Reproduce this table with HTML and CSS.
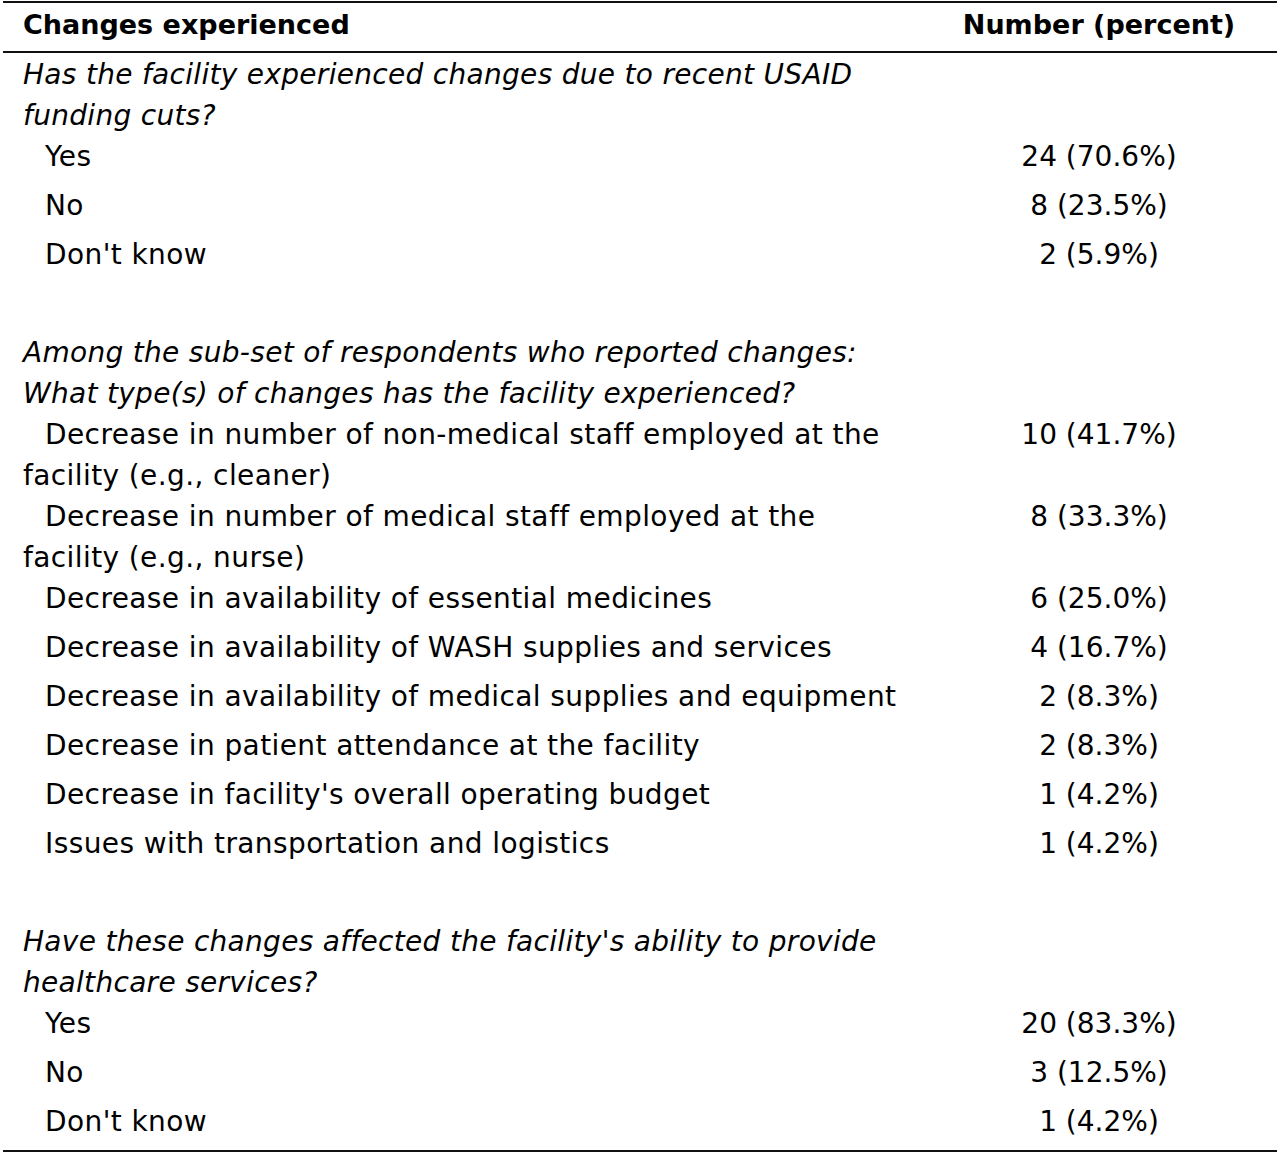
FILE: index.html
```html
<!DOCTYPE html>
<html>
<head>
<meta charset="utf-8">
<link rel="stylesheet" href="styles.css">
</head>
<body>
<div class="tbl">
  <div class="row head">
    <div class="label">Changes experienced</div>
    <div class="num">Number (percent)</div>
  </div>
  <div class="body">
    <div class="row q"><div class="label">Has the facility experienced changes due to recent USAID<br>funding cuts?</div><div class="num"></div></div>
    <div class="row"><div class="label item">Yes</div><div class="num">24 (70.6%)</div></div>
    <div class="row"><div class="label item">No</div><div class="num">8 (23.5%)</div></div>
    <div class="row"><div class="label item">Don't know</div><div class="num">2 (5.9%)</div></div>
    <div class="row"><div class="label"></div><div class="num"></div></div>
    <div class="row q"><div class="label">Among the sub-set of respondents who reported changes:<br>What type(s) of changes has the facility experienced?</div><div class="num"></div></div>
    <div class="row"><div class="label item">Decrease in number of non-medical staff employed at the<br>facility (e.g., cleaner)</div><div class="num">10 (41.7%)</div></div>
    <div class="row"><div class="label item">Decrease in number of medical staff employed at the<br>facility (e.g., nurse)</div><div class="num">8 (33.3%)</div></div>
    <div class="row"><div class="label item">Decrease in availability of essential medicines</div><div class="num">6 (25.0%)</div></div>
    <div class="row"><div class="label item">Decrease in availability of WASH supplies and services</div><div class="num">4 (16.7%)</div></div>
    <div class="row"><div class="label item">Decrease in availability of medical supplies and equipment</div><div class="num">2 (8.3%)</div></div>
    <div class="row"><div class="label item">Decrease in patient attendance at the facility</div><div class="num">2 (8.3%)</div></div>
    <div class="row"><div class="label item">Decrease in facility's overall operating budget</div><div class="num">1 (4.2%)</div></div>
    <div class="row"><div class="label item">Issues with transportation and logistics</div><div class="num">1 (4.2%)</div></div>
    <div class="row"><div class="label"></div><div class="num"></div></div>
    <div class="row q"><div class="label">Have these changes affected the facility's ability to provide<br>healthcare services?</div><div class="num"></div></div>
    <div class="row"><div class="label item">Yes</div><div class="num">20 (83.3%)</div></div>
    <div class="row"><div class="label item">No</div><div class="num">3 (12.5%)</div></div>
    <div class="row"><div class="label item">Don't know</div><div class="num">1 (4.2%)</div></div>
  </div>
</div>
</body>
</html>
```

FILE: styles.css
```css
html, body {
  margin: 0;
  padding: 0;
  background: #ffffff;
}
body {
  font-family: "DejaVu Sans", "Liberation Sans", Arial, sans-serif;
  font-size: 28px;
  letter-spacing: 0.4px;
  color: #000;
}
.tbl {
  margin: 1px 3px 0 3px;
  border-top: 2px solid #111;
  border-bottom: 2px solid #111;
}
.row {
  display: flex;
  min-height: 49px;
  line-height: 41px;
}
.head {
  min-height: 0;
  height: 47px;
  padding-top: 1px;
  font-size: 27px;
  letter-spacing: 0;
  font-weight: bold;
  border-bottom: 2px solid #111;
}
.body {
  padding-top: 1px;
}
.label {
  flex: 1;
  padding-left: 20px;
  white-space: nowrap;
}
.q .label {
  font-style: italic;
  letter-spacing: 0.3px;
}
.row.q {
  min-height: 0;
}
.item {
  text-indent: 22px;
}
.num {
  width: 356px;
  text-align: center;
  flex: none;
}
.body .num {
  letter-spacing: 0;
}
```
